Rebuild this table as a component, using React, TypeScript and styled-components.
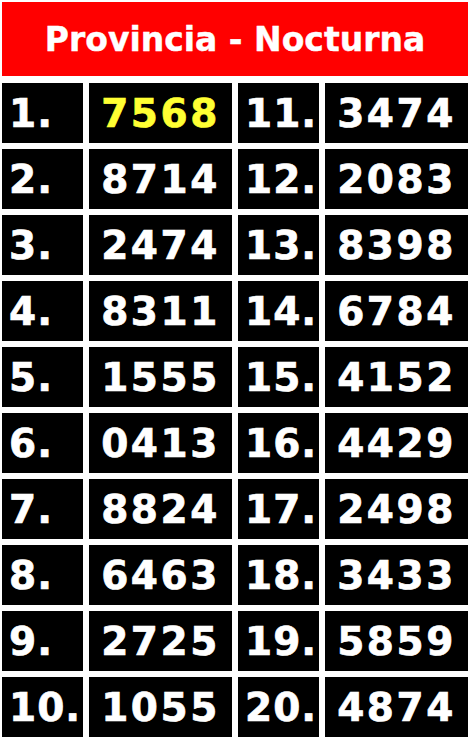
import React from "react";
import styled, { createGlobalStyle } from "styled-components";

const Global = createGlobalStyle`
  html, body { margin: 0; padding: 0; background: #ffffff; }
  body { font-family: "DejaVu Sans", Verdana, sans-serif; }
`;

const Board = styled.div`
  display: grid;
  grid-template-columns: 81px 143px 81px 143px;
  grid-template-rows: 75px;
  grid-auto-rows: 60px;
  column-gap: 6px;
  row-gap: 6px;
  padding: 2px 6px 6px 2px;
  width: max-content;
`;

const Header = styled.div`
  grid-column: 1 / -1;
  align-self: start;
  height: 74px;
  background: #ff0000;
  color: #ffffff;
  font-family: "DejaVu Sans", Verdana, sans-serif;
  font-weight: bold;
  font-size: 33px;
  -webkit-text-stroke: 0.4px #ffffff;
  display: flex;
  align-items: center;
  justify-content: center;
`;

const Cell = styled.div<{ $kind: "label" | "num"; $highlight?: boolean }>`
  background: #000000;
  color: ${(p) => (p.$highlight ? "#ffff33" : "#ffffff")};
  -webkit-text-stroke: 0.7px ${(p) => (p.$highlight ? "#ffff33" : "#ffffff")};
  font-family: "DejaVu Sans", Verdana, sans-serif;
  font-weight: bold;
  font-size: 39px;
  display: flex;
  align-items: center;
  justify-content: ${(p) => (p.$kind === "label" ? "flex-start" : "center")};
  padding-left: ${(p) => (p.$kind === "label" ? "7px" : "0")};
  letter-spacing: ${(p) => (p.$kind === "label" ? "1px" : "2.5px")};
  white-space: nowrap;
  overflow: hidden;
`;

const left = ["7568", "8714", "2474", "8311", "1555", "0413", "8824", "6463", "2725", "1055"];
const right = ["3474", "2083", "8398", "6784", "4152", "4429", "2498", "3433", "5859", "4874"];

export default function App() {
  return (
    <>
      <Global />
      <Board>
        <Header>Provincia - Nocturna</Header>
        {left.map((n, i) => (
          <React.Fragment key={i}>
            <Cell $kind="label">{i + 1}.</Cell>
            <Cell $kind="num" $highlight={i === 0}>
              {n}
            </Cell>
            <Cell $kind="label">{i + 11}.</Cell>
            <Cell $kind="num">{right[i]}</Cell>
          </React.Fragment>
        ))}
      </Board>
    </>
  );
}
